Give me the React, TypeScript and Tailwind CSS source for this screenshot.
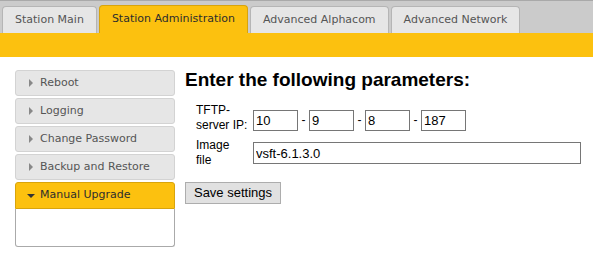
import { useState } from 'react';

const tabs = ['Station Main', 'Station Administration', 'Advanced Alphacom', 'Advanced Network'];
const menu = ['Reboot', 'Logging', 'Change Password', 'Backup and Restore'];

const Arrow = ({ open }: { open?: boolean }) =>
    open ? (
        <svg width="8" height="8" viewBox="0 0 8 8" className="mr-[5px]">
            <path d="M0 2 L8 2 L4 6 Z" fill="#333" />
        </svg>
    ) : (
        <svg width="8" height="8" viewBox="0 0 8 8" className="mr-[5px]">
            <path d="M2 0 L6 4 L2 8 Z" fill="#888" />
        </svg>
    );

const App = () => {
    const [ip, setIp] = useState(['10', '9', '8', '187']);
    const [file, setFile] = useState('vsft-6.1.3.0');

    return (
        <div className="w-[593px] h-[273px] bg-white overflow-hidden" style={{ fontFamily: '"DejaVu Sans", Verdana, sans-serif' }}>
            {/* tab strip */}
            <div className="h-[33px] bg-[#cbcbcb] border-t border-[#a9a9a9] flex items-end gap-[2px] pl-[2px]">
                {tabs.map((t, i) => (
                    <div
                        key={t}
                        className={
                            i === 1
                                ? 'h-[28px] px-[12px] flex items-center rounded-t-[4px] border border-b-0 border-[#d8a40c] bg-[#fcc10f] text-[#2d2d2d] text-[11px]'
                                : 'h-[27px] px-[12px] flex items-center rounded-t-[4px] border border-b-0 border-[#b5b5b5] bg-[#e6e6e6] text-[#555] text-[11px]'
                        }
                    >
                        {t}
                    </div>
                ))}
            </div>
            <div className="h-[24px] bg-[#fcc10f]" />

            <div className="flex pt-[13px]">
                {/* accordion */}
                <div className="ml-[15px] w-[160px] flex flex-col gap-[2px] text-[11px]">
                    {menu.map(m => (
                        <div key={m} className="h-[26px] flex items-center pl-[11px] rounded-[3px] border border-[#d3d3d3] bg-[#e6e6e6] text-[#555]">
                            <Arrow />
                            {m}
                        </div>
                    ))}
                    <div>
                        <div className="h-[27px] flex items-center pl-[11px] rounded-t-[3px] border border-[#d8a40c] bg-[#fcc10f] text-[#2d2d2d]">
                            <Arrow open />
                            Manual Upgrade
                        </div>
                        <div className="h-[38px] border border-t-0 border-[#aaa] rounded-b-[3px] bg-white" />
                    </div>
                </div>

                {/* form */}
                <div className="ml-[10px] -mt-[2px]" style={{ fontFamily: '"Liberation Sans", Arial, sans-serif' }}>
                    <h2 className="text-[19px] font-bold text-black leading-[24px]">Enter the following parameters:</h2>
                    <div className="mt-[10px] ml-[11px] grid grid-cols-[57px_auto] gap-y-[3px] text-[12px] text-black leading-[15px]">
                        <div className="w-[55px] py-[1px]">TFTP-server IP:</div>
                        <div className="flex items-center pt-[4px]">
                            {ip.map((v, i) => (
                                <div key={i} className="flex items-center">
                                    {i > 0 && <span className="w-[11px] text-center">-</span>}
                                    <input
                                        value={v}
                                        onChange={e => setIp(ip.map((x, j) => (j === i ? e.target.value : x)))}
                                        className="w-[45px] h-[21px] border border-[#767676] px-[2px] text-[13px] outline-none"
                                    />
                                </div>
                            ))}
                        </div>
                        <div className="w-[45px] py-[1px]">Image file</div>
                        <div className="flex items-center">
                            <input
                                value={file}
                                onChange={e => setFile(e.target.value)}
                                className="w-[328px] h-[22px] border border-[#767676] px-[2px] text-[13px] outline-none"
                            />
                        </div>
                    </div>
                    <button className="mt-[13px] h-[22px] w-[96px] border border-[#adadad] bg-[#e1e1e1] text-[13px] text-black">
                        Save settings
                    </button>
                </div>
            </div>
        </div>
    );
};

export default App;
